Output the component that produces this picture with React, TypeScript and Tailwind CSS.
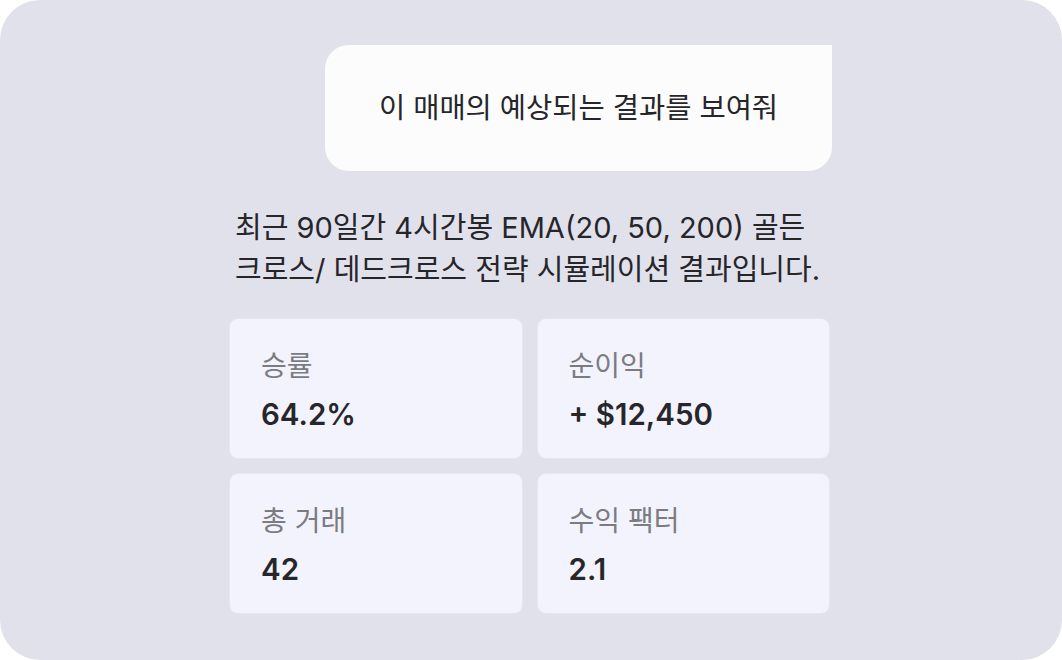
import React from "react";

const font = { fontFamily: 'Inter, "Noto Sans CJK KR", sans-serif' };

function Card({ label, value }: { label: string; value: string }) {
  return (
    <div className="h-[141px] rounded-[9px] border border-[#e6e6ec] bg-[#f3f3fd] pl-[31px] pt-[28px]">
      <div className="text-[28px] leading-[38px] text-[#7b7b82]">{label}</div>
      <div className="mt-[10px] text-[29.5px] font-semibold leading-[38px] text-[#27272b]">{value}</div>
    </div>
  );
}

export default function App() {
  return (
    <div className="h-[660px] w-[1062px] bg-white" style={font}>
      <div className="h-full w-full rounded-[40px] bg-[#e1e1ec] pt-[45px]">
        <div className="ml-[229px] w-[603px]">
          <div className="ml-auto flex h-[126px] w-[507px] items-center justify-center rounded-[24px] rounded-tr-none bg-[#fcfcfd] text-[28.5px] text-[#26262a]">
            이 매매의 예상되는 결과를 보여줘
          </div>
          <p className="mt-[36px] pl-[6px] text-[29px] leading-[42px] text-[#26262a]">
            최근 90일간 4시간봉 EMA(20, 50, 200) 골든
            <br />
            크로스/ 데드크로스 전략 시뮬레이션 결과입니다.
          </p>
          <div className="mt-[27px] grid w-[601px] grid-cols-2 gap-[14px]">
            <Card label="승률" value="64.2%" />
            <Card label="순이익" value="+ $12,450" />
            <Card label="총 거래" value="42" />
            <Card label="수익 팩터" value="2.1" />
          </div>
        </div>
      </div>
    </div>
  );
}
